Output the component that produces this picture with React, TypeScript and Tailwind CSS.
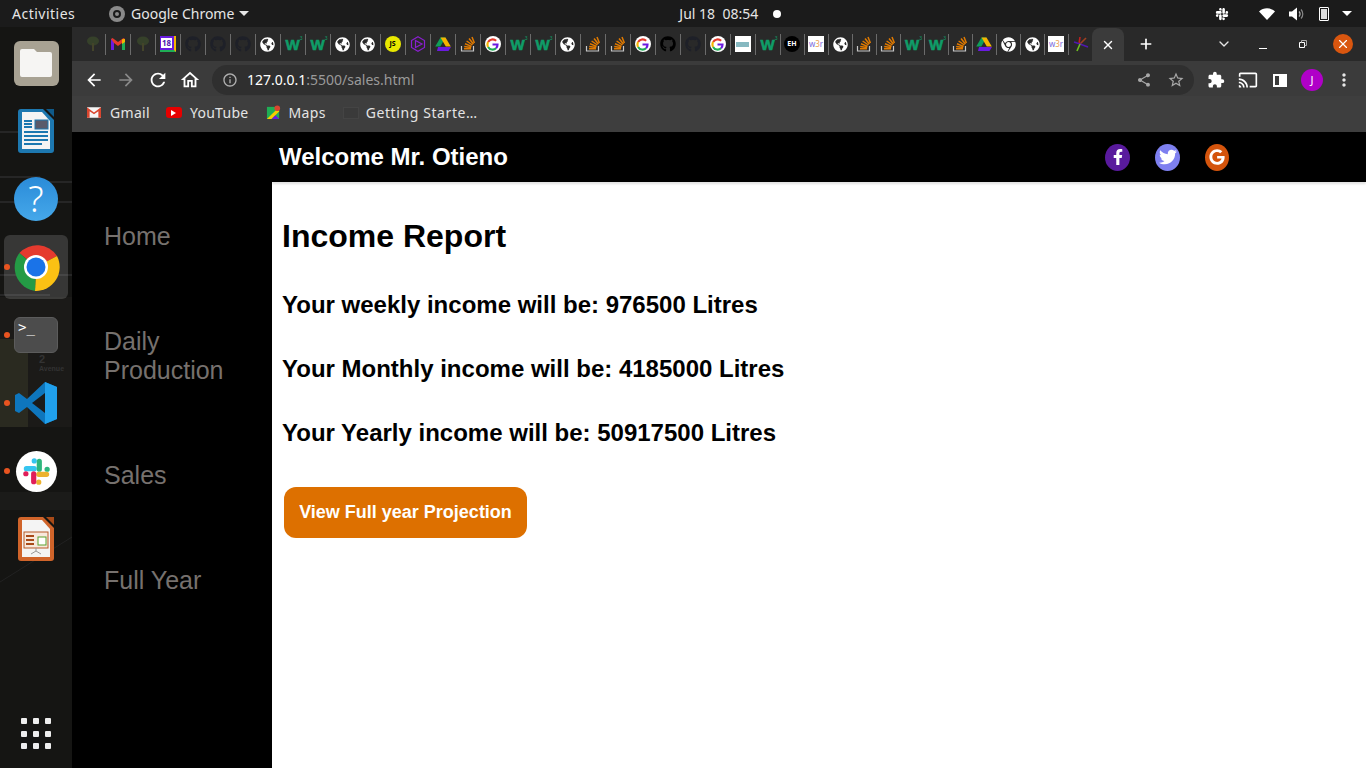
import { FaGithub, FaGlobeAmericas, FaFacebookF, FaTwitter, FaGoogle, FaSlack, FaChrome } from 'react-icons/fa';
import { MdArrowBack, MdArrowForward, MdRefresh, MdOutlineHome, MdInfoOutline, MdShare, MdStarBorder, MdExtension, MdCast, MdMoreVert } from 'react-icons/md';
import { Plus, X, ChevronDown } from 'lucide-react';

const uiFont = { fontFamily: '"Noto Sans", sans-serif' };

const Drive = () => (
    <svg viewBox="0 0 16 16" className="w-4 h-4">
        <path d="M5.5 1.5h5l-5.2 9H.2z" fill="#0f9d58" />
        <path d="M5.5 1.5h5l5.3 9h-5z" fill="#f4b400" />
        <path d="M3 11h13l-2.5 4H2z" fill="#6a1be0" />
    </svg>
);

const Gmail = () => (
    <svg viewBox="0 0 16 16" className="w-4 h-4">
        <path d="M1 3v11h3V7l4 3 4-3v7h3V3l-1.5-1L8 6 2.5 2z" fill="#e5392a" />
        <path d="M1 3v11h3V7z" fill="#6a1be0" />
        <path d="M12 7v7h3V3z" fill="#1fae55" />
        <path d="M12 3.2 15 3v3l-3 2z" fill="#f4b400" />
    </svg>
);

const Tree = () => (
    <svg viewBox="0 0 16 16" className="w-4 h-4">
        <ellipse cx="8" cy="5" rx="6" ry="4.5" fill="#36412a" />
        <path d="M7 7h2v8H7z" fill="#44442a" />
    </svg>
);

const GoogleTab = () => (
    <span className="w-4 h-4 rounded-full bg-white flex items-center justify-center">
        <svg viewBox="0 0 16 16" className="w-[13px] h-[13px]" fill="none" strokeWidth="2.6">
            <path d="M12.5 3.4A6.3 6.3 0 0 0 2.6 5" stroke="#e5392a" />
            <path d="M2.6 5a6.3 6.3 0 0 0 0 6" stroke="#f4b400" />
            <path d="M2.6 11a6.3 6.3 0 0 0 9.8 1.6" stroke="#1fae55" />
            <path d="M12.4 12.6A6.3 6.3 0 0 0 14.2 8H8" stroke="#6a1be0" />
        </svg>
    </span>
);

const W3 = () => (
    <span className="relative w-4 h-4 flex items-center justify-center text-[15px] font-bold leading-none text-[#0f9d68] [-webkit-text-stroke:0.6px_#0f9d68]" style={{ fontFamily: '"Liberation Sans", sans-serif' }}>
        W<span className="absolute right-[-2px] top-0 text-[5px] font-normal [-webkit-text-stroke:0]">3</span>
    </span>
);

const Stack = () => (
    <svg viewBox="0 0 16 16" className="w-4 h-4" fill="none">
        <path d="M1.5 10v5h12v-5" stroke="#c8c8c8" strokeWidth="1.2" />
        <path d="M4 12.8h7M4.2 10.4l7 1M5 7.8l6.6 2.6M6.6 5l5.8 4M9 2.5l4.4 5.5M12 1l2.4 6" stroke="#e07a00" strokeWidth="1.5" />
    </svg>
);

const Globe = () => <FaGlobeAmericas className="w-[15px] h-[15px] text-white" />;

const Favicon = ({ kind }: { kind: string }) => {
    switch (kind) {
        case 'tree': return <Tree />;
        case 'gmail': return <Gmail />;
        case 'cal': return (
            <span className="w-4 h-4 bg-[#6a1be0] flex items-center justify-center border-b-2 border-r-2 border-b-[#1fae55] border-r-[#f4b400]">
                <span className="bg-white text-[#5018b0] text-[8px] font-bold leading-[10px] w-[11px] text-center">18</span>
            </span>
        );
        case 'ghdark': return <FaGithub className="w-4 h-4 text-[#1e2028]" />;
        case 'ghblack': return <FaGithub className="w-4 h-4 text-black" />;
        case 'globe': return <Globe />;
        case 'w3': return <W3 />;
        case 'js': return (
            <span className="w-4 h-4 rounded-full bg-[#e8e800] text-black text-[7px] font-bold leading-4 text-center">JS</span>
        );
        case 'hex': return (
            <svg viewBox="0 0 16 16" className="w-4 h-4" fill="none" stroke="#8a1fd0" strokeWidth="1.2">
                <path d="M8 .8 14.5 4.5v7L8 15.2 1.5 11.5v-7z" />
                <path d="M5.5 4.5 12 8l-6.5 3.5z" />
            </svg>
        );
        case 'drive': return <Drive />;
        case 'stack': return <Stack />;
        case 'google': return <GoogleTab />;
        case 'kbd': return (
            <span className="w-4 h-4 bg-white flex items-center justify-center">
                <span className="w-[13px] h-[5px] bg-[#86b8c0]" />
            </span>
        );
        case 'eh': return (
            <span className="w-4 h-4 rounded-full bg-black text-white text-[7px] font-bold leading-4 text-center">EH</span>
        );
        case 'w3r': return (
            <span className="w-4 h-4 bg-white text-[8px] leading-4 text-center text-[#7a6ae0]">w<span className="text-[#e8a050]">3</span>r</span>
        );
        case 'chrome': return <FaChrome className="w-[15px] h-[15px] text-white" />;
        case 'multi': return (
            <svg viewBox="0 0 16 16" className="w-4 h-4" fill="none" strokeWidth="1.6">
                <path d="M7 1 6 8" stroke="#c02020" />
                <path d="M13 2 7 8" stroke="#a04020" />
                <path d="M1 6l6 2" stroke="#5018b0" />
                <path d="M7 8l8 3" stroke="#5018b0" />
                <path d="M7 8l-3 7" stroke="#70c020" />
            </svg>
        );
        default: return null;
    }
};

const tabs = [
    'tree', 'gmail', 'tree', 'cal', 'ghdark', 'ghdark', 'ghdark', 'globe', 'w3', 'w3', 'globe', 'globe', 'js', 'hex', 'drive',
    'stack', 'google', 'w3', 'w3', 'globe', 'stack', 'stack', 'google', 'ghblack', 'ghdark', 'google', 'kbd', 'w3',
    'eh', 'w3r', 'globe', 'stack', 'stack', 'w3', 'w3', 'stack', 'drive', 'chrome', 'globe', 'w3r', 'multi',
];

const TopBar = () => (
    <div className="h-[27px] bg-[#1b1b1b] text-[#e6e6e6] text-[14px] flex items-center shrink-0" style={uiFont}>
        <span className="ml-3 w-[97px] tracking-[0.5px]">Activities</span>
        <span className="w-4 h-4 rounded-full bg-[#8a8a8a] flex items-center justify-center">
            <span className="w-2 h-2 rounded-full border-2 border-[#1b1b1b]" />
        </span>
        <span className="ml-[6px]">Google Chrome</span>
        <span className="ml-[5px] w-0 h-0 border-x-[5px] border-x-transparent border-t-[5px] border-t-[#e6e6e6]" />
        <span className="ml-[430px]">Jul 18&nbsp;&nbsp;08:54</span>
        <span className="ml-[15px] w-2 h-2 rounded-full bg-white" />
        <FaSlack className="ml-[434px] w-[14px] h-[14px] text-white" />
        <svg viewBox="0 0 16 12" className="ml-[30px] w-4 h-3">
            <path d="M0 3.5C4.500-.8 11.500-.8 16 3.500L8 12z" fill="white" />
        </svg>
        <svg viewBox="0 0 16 14" className="ml-[14px] w-4 h-[14px]" fill="none">
            <path d="M0 4.500h3L8 .5v13l-5-4H0z" fill="white" />
            <path d="M10 4.500a3.500 3.500 0 0 1 0 5" stroke="#bbbbbb" strokeWidth="1.200" />
            <path d="M12 2.500a6.500 6.500 0 0 1 0 9" stroke="#888888" strokeWidth="1.200" />
        </svg>
        <span className="ml-[14px] relative w-[10px] h-[14px] border border-white rounded-[1px] p-[1px] flex">
            <span className="flex-1 bg-white/85" />
        </span>
        <span className="ml-[13px] w-0 h-0 border-x-[5px] border-x-transparent border-t-[5px] border-t-white" />
    </div>
);

const TabStrip = () => (
    <div className="h-[34px] bg-[#292929] flex items-center pl-[9px] shrink-0">
        <div className="flex h-[21px] items-center">
            {tabs.map((t, i) => (
                <div key={i} className={`${i < 28 ? 'w-[25px]' : 'w-[24px]'} h-[21px] flex items-center justify-center border-r border-[#6b6b6b] pr-[1px] last:border-r-0`}>
                    <Favicon kind={t} />
                </div>
            ))}
        </div>
        <div className="ml-[-1px] w-8 h-[33px] self-end bg-[#3b3b3b] rounded-t-lg flex items-center justify-center">
            <X className="w-[14px] h-[14px] text-white" strokeWidth={2.5} />
        </div>
        <Plus className="ml-[14px] w-[16px] h-[16px] text-white" strokeWidth={2.5} />
        <ChevronDown className="ml-[62px] w-4 h-4 text-[#e6e6e6]" strokeWidth={2} />
        <span className="ml-[27px] mt-[8px] w-2 h-[1px] bg-white" />
        <svg viewBox="0 0 8 8" className="ml-[32px] w-2 h-2" fill="none" stroke="white">
            <path d="M.5 2.500h5v5h-5z" />
            <path d="M2.500 2.500v-2h5v5h-2" stroke="#aaaaaa" />
        </svg>
        <span className="ml-[26px] w-5 h-5 rounded-full bg-[#d9560f] flex items-center justify-center">
            <X className="w-[14px] h-[14px] text-white" strokeWidth={2} />
        </span>
    </div>
);

const Toolbar = () => (
    <div className="h-[35px] bg-[#3b3b3b] flex items-center shrink-0 pt-[3px]">
        <MdArrowBack className="ml-[12px] w-5 h-5 text-white" />
        <MdArrowForward className="ml-[12px] w-5 h-5 text-[#8a8a8a]" />
        <MdRefresh className="ml-[11px] w-[22px] h-[22px] text-white" />
        <MdOutlineHome className="ml-[10px] w-[22px] h-[22px] text-white" />
        <div className="ml-[11px] w-[982px] h-[30px] rounded-full bg-[#2f2f2f] flex items-center pl-[10px] pr-[9px]">
            <MdInfoOutline className="w-4 h-4 text-[#b0b0b0]" />
            <span className="ml-[9px] mb-[2px] text-[14px] text-white" style={uiFont}>127.0.0.1<span className="text-[#9a9a9a]">:5500/sales.html</span></span>
            <MdShare className="ml-auto w-4 h-4 text-[#a8a8a8]" />
            <MdStarBorder className="ml-[15px] w-[18px] h-[18px] text-[#a8a8a8]" />
        </div>
        <MdExtension className="ml-[13px] w-[18px] h-[18px] text-white" />
        <MdCast className="ml-[13px] w-5 h-5 text-white" />
        <span className="ml-[15px] w-[14px] h-[13px] border-2 border-white flex justify-end">
            <span className="w-[6px] bg-white" />
        </span>
        <span className="ml-[14px] w-[22px] h-[22px] rounded-full bg-[#b000c8] text-white text-[11px] text-center leading-[22px]" style={uiFont}>J</span>
        <MdMoreVert className="ml-[11px] w-5 h-5 text-[#e6e6e6]" />
    </div>
);

const BookmarkBar = () => (
    <div className="h-[36px] bg-[#3e3e3e] flex items-center text-[14px] text-[#e4e4e4] tracking-[0.3px] shrink-0 pb-[3px]" style={uiFont}>
        <svg viewBox="0 0 16 12" className="ml-[15px] w-[14px] h-[11px]">
            <rect width="16" height="12" fill="#f5f5f5" />
            <path d="M0 0 8 6 16 0v12h-3V4.5L8 8 3 4.5V12H0z" fill="#d9452e" />
        </svg>
        <span className="ml-[9px]">Gmail</span>
        <span className="ml-[16px] w-4 h-[11px] rounded-[3px] bg-[#e60000] flex items-center justify-center">
            <span className="w-0 h-0 border-y-[3px] border-y-transparent border-l-[5px] border-l-white" />
        </span>
        <span className="ml-[8px]">YouTube</span>
        <svg viewBox="0 0 16 16" className="ml-[17px] w-[15px] h-[15px]">
            <path d="M1 2h13v13H1z" fill="#1fae55" />
            <path d="M1 15 14 2v5L6 15z" fill="#f4d000" />
            <path d="M6 15l4-4 4 4z" fill="#6a1be0" />
            <circle cx="12" cy="3.5" r="3" fill="#d9452e" />
        </svg>
        <span className="ml-[8px]">Maps</span>
        <span className="ml-[17px] w-4 h-3 border border-[#444444] bg-[#3a3a3a]" />
        <span className="ml-[7px] tracking-[0.6px]">Getting Starte…</span>
    </div>
);

const DockSlot = ({ running, active, children }: { running?: boolean; active?: boolean; children: React.ReactNode }) => (
    <div className="relative h-[68px] flex items-center justify-center">
        {active && <div className="absolute left-1 top-[2px] w-16 h-16 rounded-md bg-white/15" />}
        {running && <span className="absolute left-[4px] top-[31px] w-[6px] h-[6px] rounded-full bg-[#e95420]" />}
        <div className="relative flex">{children}</div>
    </div>
);

const LoDoc = ({ tone, edge, children }: { tone: string; edge: string; children: React.ReactNode }) => (
    <svg viewBox="0 0 36 44" className="w-[36px] h-[44px]">
        <path d="M3 0h22l11 11v30a3 3 0 0 1-3 3H3a3 3 0 0 1-3-3V3a3 3 0 0 1 3-3z" fill={tone} />
        <path d="M28 0h8v8z" fill={edge} />
        <path d="M4 3h20l8 9v28H4z" fill="#f4f4f4" />
        {children}
    </svg>
);

const Dock = () => (
    <div className="relative w-[72px] shrink-0 bg-[#151513] flex flex-col pt-[2px] overflow-hidden">
        <svg className="absolute inset-0 w-full h-full" viewBox="0 0 72 741" preserveAspectRatio="none">
            <path d="M0 270h72v130H0z" fill="#1b1a18" />
            <path d="M0 312h28v88H0z" fill="#2a2a20" />
            <path d="M0 105h22M0 150h40M40 155h32M0 175h72M0 248h72M0 268h50" stroke="#262626" strokeWidth="2" />
            <path d="M0 555 72 510" stroke="#222222" strokeWidth="1" />
            <path d="M0 465h72v18H0z" fill="#1b1b19" />
        </svg>
        <span className="absolute left-[39px] top-[328px] text-[#333333] text-[7px] font-bold leading-[8px]" style={{ fontFamily: '"Liberation Sans", sans-serif' }}><span className="text-[11px]">2</span><br />Avenue</span>

        <DockSlot>
            <div className="w-[45px] h-[45px] rounded-md bg-[#a8a293] flex items-center justify-center">
                <svg viewBox="0 0 32 28" className="w-[32px] h-[28px]">
                    <path d="M2 0h12l3 3h13a2 2 0 0 1 2 2v21a2 2 0 0 1-2 2H2a2 2 0 0 1-2-2V2a2 2 0 0 1 2-2z" fill="#f6f5f3" />
                </svg>
            </div>
        </DockSlot>
        <DockSlot>
            <LoDoc tone="#1d78b0" edge="#0f5a8a">
                <path d="M6 12h8M6 15h8M6 18h8M6 23h24M6 27h24M6 31h24M6 35h18" stroke="#1d78b0" strokeWidth="2" />
                <rect x="17" y="11" width="13" height="9" fill="#5a5a6a" stroke="#1d78b0" />
            </LoDoc>
        </DockSlot>
        <DockSlot>
            <div className="w-11 h-11 rounded-full bg-linear-to-b from-[#2a8bd8] to-[#45a8ea] text-white text-[36px] font-light leading-[44px] text-center" style={uiFont}>?</div>
        </DockSlot>
        <DockSlot active running>
            <svg viewBox="0 0 48 48" className="w-12 h-12">
                <path d="M24 24 7.4 10A24 24 0 0 1 45 13z" fill="#e53a2e" />
                <path d="M24 24 45 13A24 24 0 0 1 23 48z" fill="#fbc114" />
                <path d="M24 24 23 48A24 24 0 0 1 7.4 10z" fill="#249b45" />
                <circle cx="24" cy="24" r="12" fill="white" />
                <circle cx="24" cy="24" r="9.5" fill="#1a73e8" />
            </svg>
        </DockSlot>
        <DockSlot running>
            <div className="w-11 h-9 rounded-md bg-[#4c4c4c] border border-[#5c5c5c] text-white text-[14px] leading-[14px] pl-[3px] pt-[2px]" style={{ fontFamily: '"DejaVu Sans Mono", monospace' }}>&gt;_</div>
        </DockSlot>
        <DockSlot running>
            <svg viewBox="0 0 42 42" className="w-[42px] h-[42px]">
                <path d="M30 0 42 5v32l-12 5-18-17-8 6-4-2V13l4-2 8 6z" fill="#0e76bd" />
                <path d="M30 0 42 5v32l-12 5z" fill="#20a0ec" />
                <path d="M30 11 17 21l13 10z" fill="#1b1b1b" />
            </svg>
        </DockSlot>
        <DockSlot running>
            <div className="w-[41px] h-[41px] rounded-full bg-white flex items-center justify-center">
                <svg viewBox="0 0 24 24" className="w-[27px] h-[27px]" fill="none" strokeWidth="4.6" strokeLinecap="round">
                    <path d="M10 2.5v.1M10 9.5H3" stroke="#36c5f0" />
                    <path d="M21.5 10h-.1M14.5 10V3" stroke="#2eb67d" />
                    <path d="M14 21.5v-.1M14 14.5h7" stroke="#ecb22e" />
                    <path d="M2.5 14h.1M9.5 14v7" stroke="#e01e5a" />
                </svg>
            </div>
        </DockSlot>
        <DockSlot>
            <LoDoc tone="#d0642a" edge="#a84a18">
                <rect x="6" y="15" width="24" height="16" fill="#f7e8dc" stroke="#b85a28" />
                <path d="M8 19h8M8 23h8M8 27h8" stroke="#a84a18" strokeWidth="2" />
                <rect x="20" y="20" width="8" height="8" fill="#fff" stroke="#5aa02c" />
                <path d="M18 31v3l-5 3M18 34l5 3" stroke="#999" fill="none" />
            </LoDoc>
        </DockSlot>
        <div className="relative mt-auto mb-[19px] mx-auto grid grid-cols-3 gap-x-[6px] gap-y-[6.5px]">
            {Array.from({ length: 9 }).map((_, i) => (
                <span key={i} className="w-[6px] h-[6px] rounded-[1px] bg-[#eeeeee]" />
            ))}
        </div>
    </div>
);

const navItems = ['Home', 'Daily Production', 'Sales', 'Full Year'];

const Sidebar = () => (
    <aside className="w-[200px] shrink-0 bg-black flex flex-col gap-[76px] pt-[90px] pl-[32px] pr-[32px] text-[25px] leading-[29px] text-[#76716e]">
        {navItems.map((item) => (
            <a key={item}>{item}</a>
        ))}
    </aside>
);

const Header = () => (
    <header className="h-[50px] bg-black text-white flex items-center pl-[7px] shrink-0 shadow-[0_2px_2px_rgba(0,0,0,0.12)]">
        <h2 className="text-[24px] font-bold w-[826px]">Welcome Mr. Otieno</h2>
        <div className="flex gap-[25px]">
            <span className="w-[25px] h-[27px] rounded-[50%] bg-[#591a9d] flex items-center justify-center"><FaFacebookF className="w-4 h-4" /></span>
            <span className="w-[25px] h-[27px] rounded-[50%] bg-[#7e80f0] flex items-center justify-center"><FaTwitter className="w-[18px] h-[18px]" /></span>
            <span className="w-[24px] h-[27px] rounded-[50%] bg-[#d4540c] flex items-center justify-center"><FaGoogle className="w-4 h-4" /></span>
        </div>
    </header>
);

export default function App() {
    return (
        <div className="h-screen w-full overflow-hidden flex flex-col bg-white">
            <TopBar />
            <div className="flex flex-1 min-h-0">
                <Dock />
                <div className="flex-1 min-w-0 flex flex-col">
                    <TabStrip />
                    <Toolbar />
                    <BookmarkBar />
                    <div className="flex flex-1 min-h-0" style={{ fontFamily: '"Liberation Sans", Arial, sans-serif' }}>
                        <Sidebar />
                        <div className="flex-1 min-w-0 flex flex-col">
                            <Header />
                            <main className="pl-[10px] pt-[36px] text-black">
                                <h1 className="text-[32px] font-bold leading-[37px]">Income Report</h1>
                                <h3 className="mt-[36px] text-[24px] font-bold leading-[28px]">Your weekly income will be: 976500 Litres</h3>
                                <h3 className="mt-[36px] text-[24px] font-bold leading-[28px]">Your Monthly income will be: 4185000 Litres</h3>
                                <h3 className="mt-[36px] text-[24px] font-bold leading-[28px]">Your Yearly income will be: 50917500 Litres</h3>
                                <button className="mt-[40px] ml-[2px] block h-[51px] w-[243px] rounded-xl bg-[#dd7000] text-white text-[18px] font-bold">View Full year Projection</button>
                            </main>
                        </div>
                    </div>
                </div>
            </div>
        </div>
    );
}
